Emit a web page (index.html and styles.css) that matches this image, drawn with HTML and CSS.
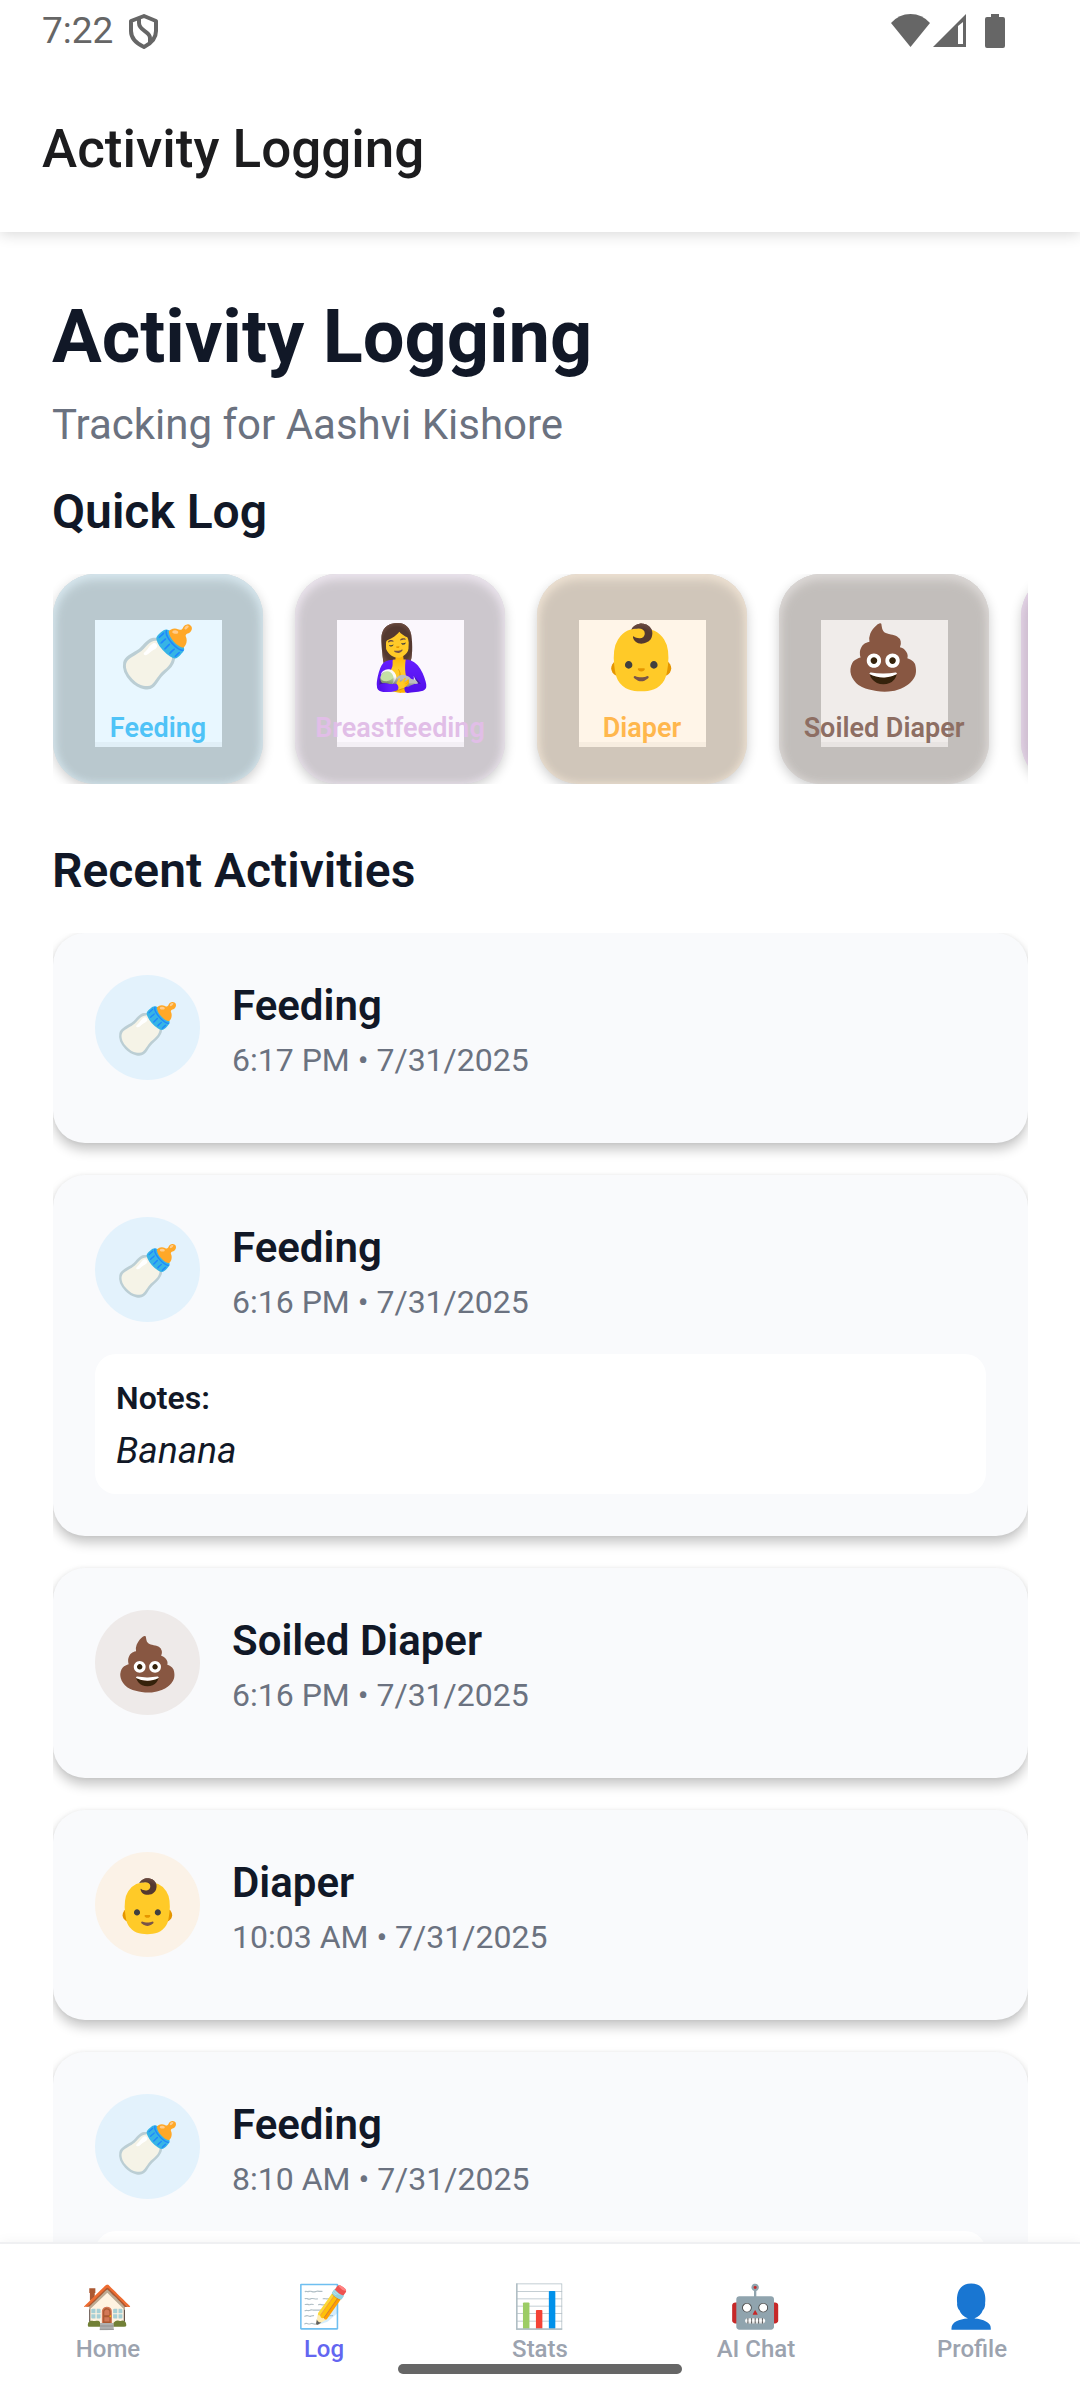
FILE: index.html
```html
<!DOCTYPE html>
<html lang="en">
<head>
<meta charset="utf-8">
<meta name="viewport" content="width=device-width, initial-scale=1">
<title>Activity Logging</title>
<link rel="stylesheet" href="styles.css">
</head>
<body>
<div class="app">
  <div class="status-bar">
    <div class="status-group">
      <span class="clock">7:22</span>
      <svg class="shield" width="30" height="36" viewBox="0 0 30 36" aria-hidden="true">
        <path d="M15 2 L27 7 V17 Q27 27 15 33 Q2 27 2 17 V7 Z" fill="none" stroke="#666" stroke-width="4" stroke-linejoin="round"/>
        <path d="M10 5 V9 C10 17 21 17 21 24 V29" fill="none" stroke="#666" stroke-width="4"/>
      </svg>
    </div>
    <div class="status-icons">
      <svg width="116" height="36" viewBox="0 0 116 36" aria-hidden="true">
        <path d="M0 9 Q8 0 19.500 0 Q31 0 39 9 L19.500 33 Z" fill="#666"/>
        <path d="M42 33 L75 0 V33 Z M67 12 V30 H72 V8 Z" fill="#666" fill-rule="evenodd"/>
        <path d="M100 0 h8 v3 h4 q2 0 2 2 v27 q0 2 -2 2 h-16 q-2 0 -2 -2 v-27 q0 -2 2 -2 h4 Z" fill="#666"/>
      </svg>
    </div>
  </div>

  <header class="app-bar">
    <span class="app-title">Activity Logging</span>
  </header>

  <main class="content">
    <h1 class="page-title">Activity Logging</h1>
    <p class="subtitle">Tracking for Aashvi Kishore</p>

    <h2 class="section-title">Quick Log</h2>
    <div class="quick-row">
      <button type="button" class="quick feeding"><span class="quick-inner"><span class="quick-emoji">🍼</span><span class="quick-label">Feeding</span></span></button>
      <button type="button" class="quick breastfeeding"><span class="quick-inner"><span class="quick-emoji">🤱</span><span class="quick-label">Breastfeeding</span></span></button>
      <button type="button" class="quick diaper"><span class="quick-inner"><span class="quick-emoji">👶</span><span class="quick-label">Diaper</span></span></button>
      <button type="button" class="quick soiled"><span class="quick-inner"><span class="quick-emoji">💩</span><span class="quick-label">Soiled Diaper</span></span></button>
      <button type="button" class="quick other" aria-label="More activities"></button>
    </div>

    <h2 class="section-title">Recent Activities</h2>
    <ul class="activity-list">
      <li class="activity">
        <div class="activity-head">
          <span class="avatar avatar-feeding">🍼</span>
          <div class="activity-text">
            <h3 class="activity-name">Feeding</h3>
            <p class="activity-time">6:17 PM • 7/31/2025</p>
          </div>
        </div>
      </li>
      <li class="activity">
        <div class="activity-head">
          <span class="avatar avatar-feeding">🍼</span>
          <div class="activity-text">
            <h3 class="activity-name">Feeding</h3>
            <p class="activity-time">6:16 PM • 7/31/2025</p>
          </div>
        </div>
        <div class="notes">
          <h4 class="notes-title">Notes:</h4>
          <p class="notes-body">Banana</p>
        </div>
      </li>
      <li class="activity">
        <div class="activity-head">
          <span class="avatar avatar-soiled">💩</span>
          <div class="activity-text">
            <h3 class="activity-name">Soiled Diaper</h3>
            <p class="activity-time">6:16 PM • 7/31/2025</p>
          </div>
        </div>
      </li>
      <li class="activity">
        <div class="activity-head">
          <span class="avatar avatar-diaper">👶</span>
          <div class="activity-text">
            <h3 class="activity-name">Diaper</h3>
            <p class="activity-time">10:03 AM • 7/31/2025</p>
          </div>
        </div>
      </li>
      <li class="activity">
        <div class="activity-head">
          <span class="avatar avatar-feeding">🍼</span>
          <div class="activity-text">
            <h3 class="activity-name">Feeding</h3>
            <p class="activity-time">8:10 AM • 7/31/2025</p>
          </div>
        </div>
        <div class="notes"></div>
      </li>
    </ul>
  </main>

  <nav class="tab-bar">
    <a class="tab" href="#home"><span class="tab-icon">🏠</span><span>Home</span></a>
    <a class="tab active" href="#log" aria-current="page"><span class="tab-icon">📝</span><span>Log</span></a>
    <a class="tab" href="#stats"><span class="tab-icon">📊</span><span>Stats</span></a>
    <a class="tab" href="#chat"><span class="tab-icon">🤖</span><span>AI Chat</span></a>
    <a class="tab" href="#profile"><span class="tab-icon">👤</span><span>Profile</span></a>
    <span class="gesture-bar"></span>
  </nav>
</div>
</body>
</html>
```
FILE: styles.css
```css
* { box-sizing: border-box; }
body {
  margin: 0;
  background: #fff;
  color: #111827;
  font-family: Roboto, "Noto Color Emoji", sans-serif;
}
h1, h2, h3, h4, p, ul { margin: 0; padding: 0; }

.app {
  display: flex;
  flex-direction: column;
  height: 100vh;
  overflow: hidden;
}

/* System status bar */
.status-bar {
  display: flex;
  justify-content: space-between;
  align-items: flex-start;
  height: 64px;
  padding: 10px 73px 0 42px;
  color: #666;
}
.status-group { display: flex; gap: 16px; }
.clock { font-size: 37px; line-height: 42px; }
.shield { margin-top: 4px; }
.status-icons { padding-top: 4px; }

/* Header */
.app-bar {
  position: relative;
  z-index: 1;
  display: flex;
  align-items: center;
  flex: none;
  height: 168px;
  padding: 2px 42px 0;
  color: #1c1c1e;
  box-shadow: 0 2px 14px rgba(0, 0, 0, .16);
  clip-path: inset(0 0 -40px 0);
}
.app-title { font-size: 53px; line-height: 62px; font-weight: 500; }

/* Scrolling content */
.content {
  flex: 1;
  min-height: 0;
  padding: 62px 52px 0;
  overflow-y: auto;
  scrollbar-width: none;
}
.page-title { font-size: 74px; line-height: 86px; font-weight: 700; }
.subtitle { margin-top: 20px; font-size: 42px; line-height: 50px; color: #6b7280; }
.section-title { margin: 34px 0; font-size: 48px; line-height: 56px; font-weight: 600; }

/* Quick log */
.quick-row {
  display: flex;
  gap: 32px;
  margin: 0 0 59px 1px;
  overflow-x: auto;
  scrollbar-width: none;
}
.quick {
  display: flex;
  flex: none;
  justify-content: center;
  align-items: flex-start;
  width: 210px;
  height: 210px;
  padding: 46px 0 0;
  border: 0;
  border-radius: 42px;
  background: var(--fill);
  color: var(--text);
  font: 600 27px/32px Roboto, "Noto Color Emoji", sans-serif;
  box-shadow: inset 0 5px 12px var(--rim), inset 0 0 8px var(--rim), 0 4px 12px rgba(0, 0, 0, .2);
}
.quick-inner {
  display: flex;
  flex-direction: column;
  align-items: center;
  width: 127px;
  height: 127px;
  background: var(--inner);
  box-shadow: inset 0 -5px rgba(0, 0, 0, .03);
}
.quick-emoji { font-size: 63px; line-height: 76px; }
.quick-label { margin-top: 16px; white-space: nowrap; }
.feeding { --fill: #b9c8ce; --rim: #d6e6ed; --inner: #e8f7ff; --text: #4fc3f7; }
.breastfeeding { --fill: #ccc7cd; --rim: #ebe4ed; --inner: #fbf7fd; --text: #e1bee7; }
.diaper { --fill: #d0c6ba; --rim: #ede1d2; --inner: #fff5e8; --text: #ffb74d; }
.soiled { --fill: #c2bebb; --rim: #dcd8d6; --inner: #f0ecea; --text: #8d6e63; }
.other { --fill: #cdbdcf; --rim: #e3d3e6; --inner: #f6e8f8; --text: #ba68c8; }

/* Recent activities */
.activity-list {
  display: flex;
  flex-direction: column;
  gap: 32px;
  margin-left: 1px;
  list-style: none;
  overflow: clip;
}
.activity {
  padding: 42px 42px 63px;
  border-radius: 32px;
  background: #f9fafc;
  box-shadow: 0 7px 12px rgba(0, 0, 0, .22), 0 0 4px rgba(0, 0, 0, .06);
}
.activity:has(.notes) { padding-bottom: 42px; }
.activity-head { display: flex; gap: 32px; }
.avatar {
  display: flex;
  flex: none;
  align-items: center;
  justify-content: center;
  width: 105px;
  height: 105px;
  padding-top: 4px;
  border-radius: 50%;
  font-size: 52px;
  line-height: 62px;
}
.avatar-feeding { background: #e3f2fc; }
.avatar-soiled { background: #eeeae9; }
.avatar-diaper { background: #fbf2e7; }
.activity-text { display: flex; flex-direction: column; gap: 10px; padding-top: 6px; }
.activity-name { font-size: 42px; line-height: 50px; font-weight: 600; }
.activity-time { font-size: 32px; line-height: 38px; color: #6b7280; }
.notes {
  display: flex;
  flex-direction: column;
  gap: 12px;
  min-height: 140px;
  margin-top: 32px;
  padding: 25px 21px 21px;
  border-radius: 21px;
  background: #fff;
}
.notes-title { font-size: 32px; line-height: 38px; font-weight: 600; }
.notes-body { font-size: 37px; line-height: 44px; font-style: italic; }

/* Bottom navigation */
.tab-bar {
  position: relative;
  display: grid;
  grid-template-columns: repeat(5, 1fr);
  flex: none;
  height: 158px;
  padding-top: 38px;
  border-top: 2px solid #eff0f2;
  background: #fff;
  box-shadow: 0 0 12px rgba(0, 0, 0, .05);
}
.tab {
  display: flex;
  flex-direction: column;
  align-items: center;
  gap: 3px;
  color: #9ca3af;
  font-size: 24px;
  line-height: 28px;
  font-weight: 500;
  text-decoration: none;
}
.tab.active { color: #6366f1; }
.tab-icon { font-size: 42px; line-height: 50px; }
.gesture-bar {
  position: absolute;
  bottom: 26px;
  left: 50%;
  width: 284px;
  height: 10px;
  margin-left: -142px;
  border-radius: 5px;
  background: #666;
}
```
